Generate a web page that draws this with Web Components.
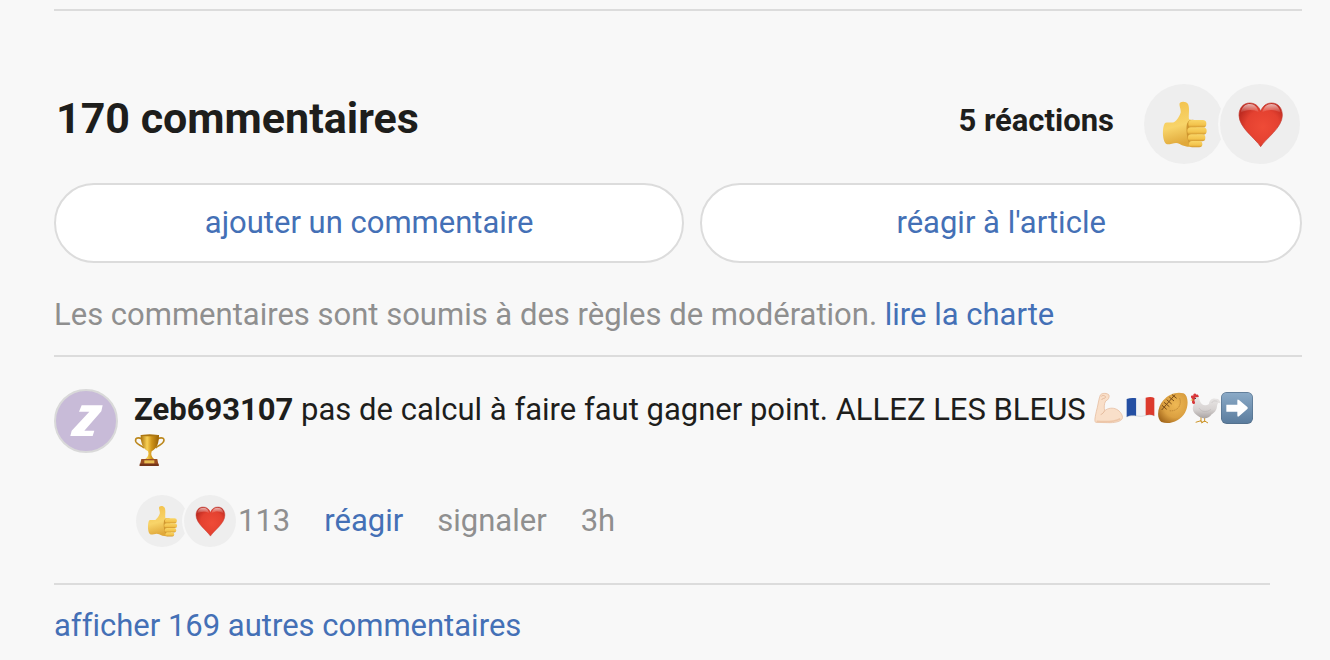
<!DOCTYPE html>
<html lang="fr">
<head>
<meta charset="utf-8">
<meta name="viewport" content="width=device-width, initial-scale=1">
<title>Commentaires</title>
<style>
  body {
    margin: 0;
    background: #f8f8f8;
    color: #1e1e1c;
    font-family: Roboto, "Liberation Sans", sans-serif;
    font-size: 31px;
    line-height: 42px;
    font-variant-ligatures: none;
    --link: #4470b6;
    --muted: #8f8f8f;
    --line: #dcdcdc;
  }
</style>
</head>
<body>
<comments-section>
  <comments-header slot="header" total="170" reactions="5"></comments-header>
  <pill-button slot="actions">ajouter un commentaire</pill-button>
  <pill-button slot="actions">réagir à l'article</pill-button>
  <user-comment author="Zeb693107" likes="113" age="3h">pas de calcul à faire faut gagner point. ALLEZ LES BLEUS <emoji-icon name="arm"></emoji-icon><emoji-icon name="flag"></emoji-icon><emoji-icon name="ball"></emoji-icon><emoji-icon name="rooster"></emoji-icon><emoji-icon name="arrow"></emoji-icon> <emoji-icon name="trophy"></emoji-icon></user-comment>
</comments-section>

<script>
const EMOJIS = {
  thumb: {
    label: 'pouce levé',
    box: '-1 -3 144 144',
    art: `
      <defs>
        <linearGradient id="skin" x1="0" y1="0" x2="0.2" y2="1">
          <stop offset="0" stop-color="#f2c04a"/><stop offset="0.6" stop-color="#f8d469"/><stop offset="1" stop-color="#e0a83a"/>
        </linearGradient>
        <linearGradient id="finger" x1="0" y1="0" x2="0" y2="1">
          <stop offset="0" stop-color="#f9d566"/><stop offset="0.65" stop-color="#f3c34c"/><stop offset="1" stop-color="#cf932b"/>
        </linearGradient>
      </defs>
      <path fill="url(#skin)" d="M14 66C22 63 34 66 41 64C50 57 58 45 61 35C63 24 54 11 59 5C65 0 78 1 83 9C89 22 84 42 86 55C96 56 104 62 108 70V134C94 140 72 138 58 129C46 121 33 131 20 130C5 124 5 78 14 66Z"/>
      <path fill="#cf962f" d="M80 68C85 56 96 55 106 58L112 136L88 133C80 112 76 86 80 68Z"/>
      <rect x="84" y="57" width="54" height="23" rx="11" fill="url(#finger)"/>
      <rect x="81" y="79" width="58" height="22" rx="11" fill="url(#finger)"/>
      <rect x="83" y="100" width="52" height="21" rx="10" fill="url(#finger)"/>
      <rect x="86" y="120" width="40" height="19" rx="9" fill="url(#finger)"/>`
  },
  heart: {
    label: 'cœur',
    box: '1 -3 144 144',
    art: `
      <defs>
        <radialGradient id="red" cx="0.55" cy="0.55" r="0.6">
          <stop offset="0" stop-color="#ef4b37"/><stop offset="0.65" stop-color="#e44130"/><stop offset="1" stop-color="#bd2a20"/>
        </radialGradient>
        <linearGradient id="shine" x1="0" y1="0" x2="0" y2="1">
          <stop offset="0" stop-color="#fff" stop-opacity="0.65"/><stop offset="1" stop-color="#fff" stop-opacity="0"/>
        </linearGradient>
      </defs>
      <path fill="url(#red)" stroke="#c23a30" stroke-width="2" d="M75 31C81 14 93 6 108 6C128 6 140 22 140 43C140 80 91 112 75 137C59 112 10 80 10 43C10 22 22 6 42 6C57 6 69 14 75 31Z"/>
      <path fill="url(#shine)" d="M15 35C19 16 30 9 43 9C56 9 66 18 69 34C51 23 32 26 15 35ZM80 34C84 17 94 9 107 9C121 9 132 19 135 36C117 24 98 24 80 34Z"/>`
  },
  arm: {
    label: 'biceps',
    box: '0 0 96 96',
    art: `
      <path fill="#f9dfc9" stroke="#e3b596" stroke-width="2" d="M22 9C27 2 43 3 48 9C50 16 46 24 38 27C33 36 33 47 35 56C45 48 59 46 71 52C82 58 90 70 88 79C85 89 63 93 44 92L8 91C3 87 7 73 10 58C15 42 16 24 22 9Z"/>
      <path fill="none" stroke="#dba988" stroke-width="2" d="M25 13C30 8 39 11 37 17C34 21 28 17 26 24M35 56C32 62 28 66 23 68"/>
      <path fill="none" stroke="#edc6a8" stroke-width="5" d="M11 88C38 90 66 89 82 80"/>`
  },
  flag: {
    label: 'drapeau français',
    box: '-2 0 96 96',
    art: `
      <path fill="#244fa3" d="M3 21C13 17 23 17 32 19V72C23 70 13 70 3 75Z"/>
      <path fill="#f1f3f5" d="M32 19C42 21 50 20 60 17V70C50 74 42 75 32 72Z"/>
      <path fill="#dc3a2d" d="M60 17C70 14 80 14 86 18V72C79 68 70 67 60 70Z"/>
      <path fill="none" stroke="#777" stroke-opacity="0.3" stroke-width="2" d="M3 75C24 66 39 76 54 72C69 67 79 68 86 72"/>`
  },
  ball: {
    label: 'ballon de rugby',
    box: '0 0 96 96',
    art: `
      <defs>
        <radialGradient id="leather" cx="0.6" cy="0.4" r="0.7">
          <stop offset="0" stop-color="#eeb854"/><stop offset="0.6" stop-color="#dba041"/><stop offset="1" stop-color="#a66a1d"/>
        </radialGradient>
      </defs>
      <path fill="url(#leather)" d="M79 4C94 10 96 40 84 62C70 87 38 99 13 90C-3 78 2 44 19 25C35 6 60-2 79 4Z"/>
      <path fill="none" stroke="#7b4d18" stroke-width="3" d="M54 8L14 54M45 8L59 19M37 15L51 27M29 23L44 36M21 31L37 44M15 40L29 52"/>
      <path fill="none" stroke="#b0752a" stroke-width="2" stroke-dasharray="4 2" d="M68 19C76 42 58 60 36 56"/>`
  },
  rooster: {
    label: 'coq',
    box: '0 0 96 96',
    art: `
      <defs>
        <linearGradient id="feather" x1="0" y1="0" x2="0" y2="1">
          <stop offset="0" stop-color="#eceae9"/><stop offset="0.6" stop-color="#d7d3d2"/><stop offset="1" stop-color="#a9a3a2"/>
        </linearGradient>
      </defs>
      <path fill="none" stroke="#cc9427" stroke-width="3" d="M36 72V90M47 72V90M20 91L36 86L42 93M36 93L47 87L57 93"/>
      <path fill="url(#feather)" d="M14 14C22 7 31 14 33 28C38 41 50 43 60 36C61 24 70 17 80 20C88 19 94 25 94 34C88 29 85 34 84 43C83 56 75 63 68 67C61 78 49 81 38 77C21 71 8 58 12 44C15 35 17 26 14 14Z"/>
      <path fill="#d8383b" d="M11 22C3 16 5 8 13 11C12 3 20 3 22 8C29 5 28 13 30 15L19 16L16 26C20 31 18 38 13 36C7 34 9 27 11 22Z"/>
      <circle cx="19" cy="19" r="2" fill="#222"/>
      <path fill="#d7a12d" d="M12 20L4 25L13 26Z"/>
      <path fill="none" stroke="#aaa4a3" stroke-width="1" d="M30 48C38 61 52 62 66 52M68 33C72 25 79 26 85 28"/>`
  },
  arrow: {
    label: 'flèche droite',
    box: '0 0 96 96',
    art: `
      <defs>
        <linearGradient id="steel" x1="0" y1="0" x2="0" y2="1">
          <stop offset="0" stop-color="#8baac7"/><stop offset="1" stop-color="#5b7d9e"/>
        </linearGradient>
      </defs>
      <rect width="96" height="96" rx="17" fill="#54718d"/>
      <rect x="2" y="2" width="92" height="91" rx="15" fill="url(#steel)"/>
      <path fill="#fff" d="M16 38H49V26Q49 20 54 24L79 45Q82 48 79 51L54 73Q49 77 49 70V59H16Z"/>`
  },
  trophy: {
    label: 'trophée',
    box: '0 0 96 96',
    art: `
      <defs>
        <linearGradient id="gold">
          <stop offset="0" stop-color="#a8700d"/><stop offset="0.35" stop-color="#f8d055"/><stop offset="0.6" stop-color="#cf9419"/><stop offset="1" stop-color="#966006"/>
        </linearGradient>
      </defs>
      <path fill="none" stroke="#bc881d" stroke-width="5" d="M24 15C9 7 2 14 6 24C10 33 22 33 30 42M70 15C85 7 94 14 88 24C84 33 72 33 65 42"/>
      <path fill="url(#gold)" d="M20 3H75C75 26 70 43 53 52C50 61 52 68 60 75H34C43 68 45 61 42 52C25 43 20 25 20 3Z"/>
      <ellipse cx="47" cy="4" rx="27" ry="3" fill="#ac7610"/>
      <path fill="#9a4d21" d="M22 75H70L74 96H17Z"/>
      <path fill="#74351a" d="M17 89H74V96H17Z"/>
      <path fill="#e8bd52" d="M31 79H61V88H31Z"/>`
  }
};

class EmojiIcon extends HTMLElement {
  constructor() {
    super();
    this.attachShadow({ mode: 'open' });
  }

  connectedCallback() {
    const emoji = EMOJIS[this.getAttribute('name')];
    this.shadowRoot.innerHTML = `
      <style>
        :host {
          display: inline-block;
          width: var(--emoji-size, 32px);
          height: var(--emoji-size, 32px);
          vertical-align: -4px;
        }

        svg {
          display: block;
          width: 100%;
          height: 100%;
        }
      </style>
      <svg viewBox="${emoji.box}" role="img" aria-label="${emoji.label}">${emoji.art}</svg>
    `;
  }
}

class ReactionBadges extends HTMLElement {
  constructor() {
    super();
    this.attachShadow({ mode: 'open' });
  }

  connectedCallback() {
    this.shadowRoot.innerHTML = `
      <style>
        :host {
          display: flex;
          --badge-size: 52px;
          --emoji-size: 32px;
        }

        :host([size="large"]) {
          --badge-size: 80px;
          --emoji-size: 48px;
        }

        .badge {
          display: grid;
          place-items: center;
          width: var(--badge-size);
          height: var(--badge-size);
          border-radius: 50%;
          background: #eee;
        }

        .badge + .badge {
          margin-left: -4px;
          box-shadow: 0 0 0 2px #f8f8f8;
        }
      </style>
      <span class="badge"><emoji-icon name="thumb"></emoji-icon></span>
      <span class="badge"><emoji-icon name="heart"></emoji-icon></span>
    `;
  }
}

class CommentsHeader extends HTMLElement {
  constructor() {
    super();
    this.attachShadow({ mode: 'open' });
  }

  connectedCallback() {
    this.shadowRoot.innerHTML = `
      <style>
        :host {
          display: flex;
          align-items: center;
          justify-content: space-between;
          padding: 0 2px;
        }

        h2 {
          margin: 0;
          padding-bottom: 12px;
          font-size: 43px;
          line-height: 48px;
          font-weight: bold;
        }

        .reactions {
          display: flex;
          align-items: center;
          gap: 30px;
        }

        strong {
          padding-bottom: 6px;
        }
      </style>
      <h2>${this.getAttribute('total')} commentaires</h2>
      <div class="reactions">
        <strong>${this.getAttribute('reactions')} réactions</strong>
        <reaction-badges size="large"></reaction-badges>
      </div>
    `;
  }
}

class PillButton extends HTMLElement {
  constructor() {
    super();
    this.attachShadow({ mode: 'open' });
  }

  connectedCallback() {
    this.shadowRoot.innerHTML = `
      <style>
        :host {
          display: block;
        }

        button {
          width: 100%;
          height: 80px;
          padding: 0 24px;
          border: 2px solid var(--line);
          border-radius: 40px;
          background: #fff;
          color: var(--link);
          font: inherit;
          cursor: pointer;
        }
      </style>
      <button type="button"><slot></slot></button>
    `;
  }
}

class UserComment extends HTMLElement {
  constructor() {
    super();
    this.attachShadow({ mode: 'open' });
  }

  connectedCallback() {
    const author = this.getAttribute('author');
    this.shadowRoot.innerHTML = `
      <style>
        :host {
          display: flex;
          gap: 16px;
          padding: 32px 0 36px;
          border-bottom: 2px solid var(--line);
        }

        .avatar {
          flex: none;
          box-sizing: border-box;
          width: 64px;
          height: 64px;
          border: 2px solid #d9d9d9;
          border-radius: 50%;
          background: #c8bbd8;
        }

        .avatar svg {
          display: block;
        }

        .body {
          flex: 1;
          min-width: 0;
        }

        p {
          margin: 0;
        }

        .actions {
          display: flex;
          align-items: center;
          gap: 34px;
          margin-top: 22px;
          color: var(--muted);
        }

        .likes {
          display: flex;
          align-items: center;
          gap: 2px;
          padding-left: 2px;
        }

        button {
          padding: 0;
          border: 0;
          background: none;
          color: inherit;
          font: inherit;
          cursor: pointer;
        }

        .react {
          color: var(--link);
        }
      </style>
      <div class="avatar">
        <svg width="60" height="60" viewBox="0 0 180 180" role="img" aria-label="Avatar de ${author}">
          <path fill="#fff" d="M77 43H140L136 61L85 119H115L110 135H43L47 119L100 62H69Z"/>
        </svg>
      </div>
      <div class="body">
        <p><strong>${author}</strong> <slot></slot></p>
        <div class="actions">
          <span class="likes"><reaction-badges></reaction-badges>${this.getAttribute('likes')}</span>
          <button type="button" class="react">réagir</button>
          <button type="button">signaler</button>
          <span>${this.getAttribute('age')}</span>
        </div>
      </div>
    `;
  }
}

class CommentsSection extends HTMLElement {
  constructor() {
    super();
    this.attachShadow({ mode: 'open' });
  }

  connectedCallback() {
    this.shadowRoot.innerHTML = `
      <style>
        :host {
          display: block;
          padding: 9px 28px 14px 54px;
        }

        hr {
          margin: 0;
          border: 0;
          border-top: 2px solid var(--line);
        }

        header {
          margin-top: 73px;
        }

        .actions {
          display: grid;
          grid-template-columns: 22fr 21fr;
          gap: 16px;
          margin-top: 19px;
        }

        .rules {
          margin: 31px 0 19px;
          color: var(--muted);
        }

        .list {
          padding-right: 32px;
        }

        .more {
          margin: 20px 0 0;
        }

        a {
          color: var(--link);
          text-decoration: none;
        }
      </style>
      <hr>
      <header><slot name="header"></slot></header>
      <div class="actions"><slot name="actions"></slot></div>
      <p class="rules">Les commentaires sont soumis à des règles de modération. <a href="#charte">lire la charte</a></p>
      <hr>
      <div class="list"><slot></slot></div>
      <p class="more"><a href="#commentaires">afficher 169 autres commentaires</a></p>
    `;
  }
}

customElements.define('emoji-icon', EmojiIcon);
customElements.define('reaction-badges', ReactionBadges);
customElements.define('comments-header', CommentsHeader);
customElements.define('pill-button', PillButton);
customElements.define('user-comment', UserComment);
customElements.define('comments-section', CommentsSection);
</script>
</body>
</html>
